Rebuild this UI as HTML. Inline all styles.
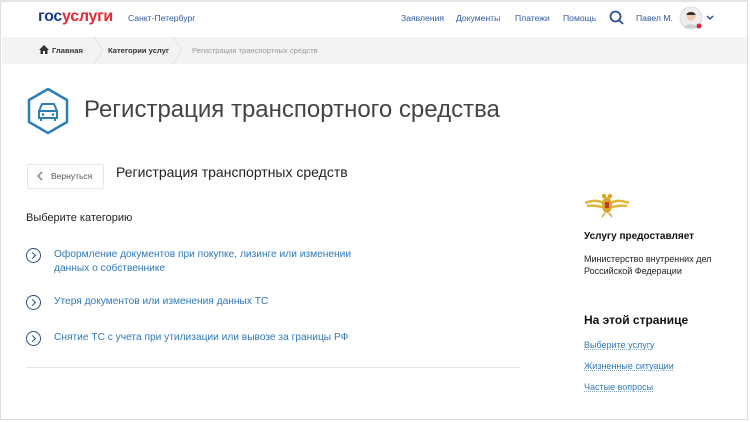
<!DOCTYPE html>
<html><head><meta charset="utf-8"><style>
*{margin:0;padding:0;box-sizing:border-box}
body{width:750px;height:422px;overflow:hidden;background:#fff;font-family:"Liberation Sans",sans-serif;position:relative}
.frame{position:absolute;left:0;top:0;width:748px;height:420px;border:1px solid #ddd;border-top:2px solid #e4e4e4}
.a{position:absolute;white-space:nowrap}
.nav{font-size:8.6px;color:#2e5a9e;top:13px}
.bc{position:absolute;left:2px;top:37px;width:745px;height:27px;background:#f3f3f3}
.bt{font-size:7.6px;top:46px}
.lnk{color:#2f78b8;font-size:10.2px;line-height:14px}
.circ{position:absolute;width:15px;height:15px;border:1.5px solid #2a4f80;border-radius:50%}
.circ:after{content:"";position:absolute;left:3px;top:4px;width:4px;height:4px;border-right:1.5px solid #2a4f80;border-top:1.5px solid #2a4f80;transform:rotate(45deg)}
.side{font-size:9px;color:#2f78b8;text-decoration:underline dotted #8ab;}
</style></head><body>
<div class="frame"></div>
<div class="a" style="left:38px;top:8px;font-size:16px;font-weight:bold;letter-spacing:-0.3px"><span style="color:#1a3d8a">гос</span><span style="color:#e3262f">услуги</span></div>
<div class="a" style="left:128px;top:13px;font-size:8.6px;color:#2e5a9e">Санкт-Петербург</div>
<div class="a nav" style="left:401px">Заявления</div>
<div class="a nav" style="left:456px">Документы</div>
<div class="a nav" style="left:515px">Платежи</div>
<div class="a nav" style="left:563px">Помощь</div>
<svg class="a" style="left:609px;top:10px" width="16" height="16"><circle cx="6.5" cy="6.5" r="5" fill="none" stroke="#2a4f9a" stroke-width="1.8"/><path d="M10 10l4 4" stroke="#2a4f9a" stroke-width="1.8"/></svg>
<div class="a nav" style="left:636px">Павел М.</div>
<svg class="a" style="left:679px;top:6px" width="26" height="26"><circle cx="12" cy="12" r="11" fill="#eee" stroke="#ddd"/><circle cx="12" cy="10" r="4.5" fill="#f1c9a8"/><path d="M7.5 9c0-4 9-4 9 0" fill="#333"/><path d="M5 22c2-5 12-5 14 0" fill="#c8d0d8"/><circle cx="20" cy="20" r="2.5" fill="#d7263d"/></svg>
<svg class="a" style="left:706px;top:15px" width="8" height="6"><path d="M1 1l3 3 3-3" fill="none" stroke="#2a4f9a" stroke-width="1.5"/></svg>
<div class="bc"></div>
<svg class="a" style="left:93px;top:37px" width="12" height="27"><path d="M1 0l9 13.5L1 27" fill="none" stroke="#e2e2e2"/></svg>
<svg class="a" style="left:172px;top:37px" width="12" height="27"><path d="M1 0l9 13.5L1 27" fill="none" stroke="#e2e2e2"/></svg>
<svg class="a" style="left:39px;top:45px" width="10" height="9"><path d="M5 0L0 5h1.5v4h2.5V6h2v3h2.5V5H10z" fill="#333"/></svg>
<div class="a bt" style="left:52px;color:#333;font-weight:bold">Главная</div>
<div class="a bt" style="left:108px;color:#333;font-weight:bold">Категории услуг</div>
<div class="a bt" style="left:192px;color:#999">Регистрация транспортных средств</div>
<svg class="a" style="left:24px;top:87px" width="48" height="48"><path d="M24 2L43 13v22L24 46 5 35V13z" fill="none" stroke="#2b7fb8" stroke-width="2.5" stroke-linejoin="round"/><path d="M15 24l3-7h12l3 7v7H15z" fill="none" stroke="#2b7fb8" stroke-width="2" stroke-linejoin="round"/><path d="M14 24h20M17 31v3M31 31v3" stroke="#2b7fb8" stroke-width="2"/><circle cx="19" cy="27.5" r="1.3" fill="#2b7fb8"/><circle cx="29" cy="27.5" r="1.3" fill="#2b7fb8"/></svg>
<div class="a" style="left:84px;top:96px;font-size:24px;color:#444;font-weight:300">Регистрация транспортного средства</div>
<div class="a" style="left:27px;top:164px;width:77px;height:25px;border:1px solid #e6e6e6;border-radius:2px"></div>
<svg class="a" style="left:37px;top:171px" width="6" height="10"><path d="M5 1L1 5l4 4" fill="none" stroke="#777" stroke-width="1.3"/></svg>
<div class="a" style="left:51px;top:171px;font-size:8.5px;color:#555">Вернуться</div>
<div class="a" style="left:116px;top:164px;font-size:14px;color:#222">Регистрация транспортных средств</div>
<div class="a" style="left:26px;top:212px;font-size:11px;color:#222">Выберите категорию</div>
<div class="circ" style="left:26px;top:248px"></div>
<div class="a lnk" style="left:54px;top:248px">Оформление документов при покупке, лизинге или изменении<br>данных о собственнике</div>
<div class="circ" style="left:26px;top:295px"></div>
<div class="a lnk" style="left:54px;top:295px">Утеря документов или изменения данных ТС</div>
<div class="circ" style="left:26px;top:331px"></div>
<div class="a lnk" style="left:54px;top:331px">Снятие ТС с учета при утилизации или вывозе за границы РФ</div>
<div class="a" style="left:26px;top:367px;width:494px;height:1px;background:#e6e6e6"></div>
<svg class="a" style="left:583px;top:190px" width="48" height="28"><path d="M2 13c8-3 14-3 20 1M46 13c-8-3-14-3-20 1M4 16c7-1 12 0 18 2M44 16c-7-1-12 0-18 2" stroke="#e0b63a" stroke-width="2.5" fill="none"/><ellipse cx="24" cy="15" rx="5" ry="8" fill="#d9a828"/><circle cx="21" cy="6" r="2.2" fill="#d9a828"/><circle cx="27" cy="6" r="2.2" fill="#d9a828"/><rect x="22" y="12" width="4" height="6" fill="#c0392b"/><path d="M22 23l-3 4M26 23l3 4" stroke="#d9a828" stroke-width="1.5"/></svg>
<div class="a" style="left:584px;top:231px;font-size:10px;font-weight:bold;color:#111">Услугу предоставляет</div>
<div class="a" style="left:584px;top:253px;font-size:9px;color:#222;line-height:12px">Министерство внутренних дел<br>Российской Федерации</div>
<div class="a" style="left:584px;top:313px;font-size:12px;font-weight:bold;color:#111">На этой странице</div>
<div class="a side" style="left:584px;top:340px">Выберите услугу</div>
<div class="a side" style="left:584px;top:361px">Жизненные ситуации</div>
<div class="a side" style="left:584px;top:382px">Частые вопросы</div>
</body></html>
